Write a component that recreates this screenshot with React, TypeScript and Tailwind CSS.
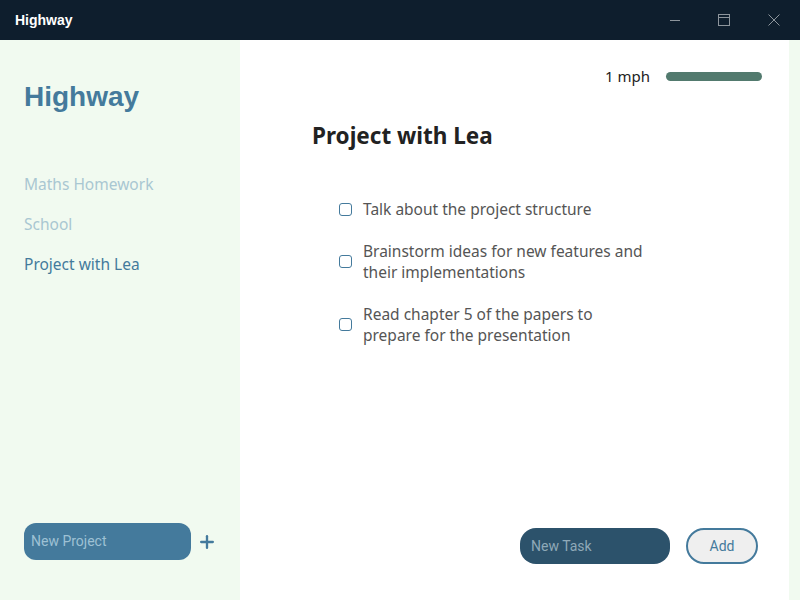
import { Plus } from "lucide-react";

const projects = [
  { name: "Maths Homework", active: false },
  { name: "School", active: false },
  { name: "Project with Lea", active: true },
];

const tasks = [
  "Talk about the project structure",
  "Brainstorm ideas for new features and their implementations",
  "Read chapter 5 of the papers to prepare for the presentation",
];

function TitleBar() {
  return (
    <div className="h-10 bg-[#0e1e2d] flex items-center justify-between">
      <span className="pl-[15px] text-white text-[14px] font-bold font-['Liberation_Sans',Arial,sans-serif]">
        Highway
      </span>
      <div className="flex h-full">
        {/* minimize */}
        <div className="w-[49px] h-full flex items-center justify-center">
          <svg width="10" height="10" viewBox="0 0 10 10">
            <line x1="0" y1="5.5" x2="10" y2="5.5" stroke="#8d959c" strokeWidth="1" />
          </svg>
        </div>
        {/* maximize */}
        <div className="w-[49px] h-full flex items-center justify-center">
          <svg width="12" height="12" viewBox="0 0 12 12">
            <rect x="0.5" y="0.5" width="11" height="11" fill="none" stroke="#8d959c" strokeWidth="1" />
            <line x1="0" y1="3.5" x2="12" y2="3.5" stroke="#8d959c" strokeWidth="1" />
          </svg>
        </div>
        {/* close */}
        <div className="w-[52px] h-full flex items-center justify-center">
          <svg width="12" height="12" viewBox="0 0 12 12">
            <path d="M0.5 0.5 L11.5 11.5 M11.5 0.5 L0.5 11.5" stroke="#8d959c" strokeWidth="1" />
          </svg>
        </div>
      </div>
    </div>
  );
}

function Sidebar() {
  return (
    <div className="w-[240px] bg-[#f1faf0] flex flex-col px-6 pt-[41px] pb-10">
      <h1 className="text-[28px] font-bold text-[#447a9c] font-['Liberation_Sans',Arial,sans-serif] leading-[32px]">
        Highway
      </h1>
      <ul className="mt-[59px] flex flex-col gap-[16px]">
        {projects.map((p) => (
          <li
            key={p.name}
            className={`text-[15.5px] leading-6 ${
              p.active ? "text-[#447a9c]" : "text-[#a9c7d2]"
            }`}
          >
            {p.name}
          </li>
        ))}
      </ul>
      <div className="mt-auto flex items-center gap-[6px]">
        <div className="w-[167px] h-[37px] shrink-0 rounded-[12px] bg-[#447a9c] flex items-center px-[7px] text-[14px] text-[#9ec1d4] font-['Roboto',sans-serif]">
          New Project
        </div>
        <Plus className="w-[20px] h-[20px] shrink-0 text-[#447a9c]" strokeWidth={2.8} />
      </div>
    </div>
  );
}

function Main() {
  return (
    <div className="flex-1 bg-white flex flex-col pt-[25px] pb-[36px]">
      <div className="flex items-center justify-end gap-4 pr-[27px]">
        <span className="text-[15px] text-[#222]">1 mph</span>
        <div className="w-[96px] h-[9px] rounded-full bg-[#527a6e]" />
      </div>
      <div className="pl-[72px] mt-[32px]">
        <h2 className="text-[22.5px] font-bold text-[#222] leading-8">Project with Lea</h2>
        <ul className="mt-[47px] pl-[27px] flex flex-col gap-[21px]">
          {tasks.map((t) => (
            <li key={t} className="flex items-center gap-[11px]">
              <span className="w-[13px] h-[13px] shrink-0 rounded-[3px] border border-[#447a9c] bg-white" />
              <span className="text-[15.5px] leading-[21px] text-[#555] w-[282px]">{t}</span>
            </li>
          ))}
        </ul>
      </div>
      <div className="mt-auto flex items-center justify-end gap-4 pr-[31px]">
        <div className="w-[150px] h-[36px] rounded-[16px] bg-[#2c526b] flex items-center px-[11px] text-[14px] text-[#8fa9b8] font-['Roboto',sans-serif]">
          New Task
        </div>
        <button className="w-[72px] h-[36px] rounded-full bg-[#efefef] border-2 border-[#447a9c] text-[14px] text-[#447a9c] font-['Roboto',sans-serif]">
          Add
        </button>
      </div>
    </div>
  );
}

export default function App() {
  return (
    <div className="w-[800px] h-[600px] flex flex-col font-['Noto_Sans',sans-serif] overflow-hidden">
      <TitleBar />
      <div className="flex flex-1">
        <Sidebar />
        <Main />
        <div className="w-[11px] bg-[#f1faf0]" />
      </div>
    </div>
  );
}
